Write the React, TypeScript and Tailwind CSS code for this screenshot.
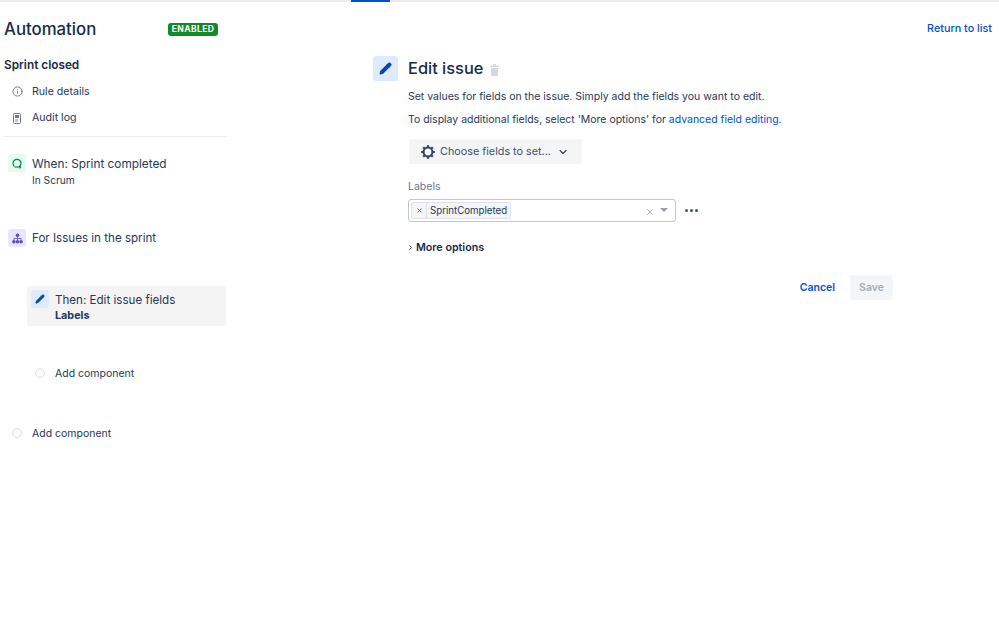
import { Info, ChevronDown, ChevronRight, X, Pencil } from "lucide-react";

function AddComponent({ className }: { className: string }) {
  return (
    <div className={`flex items-center h-[16px] ${className}`}>
      <span className="w-[10px] h-[10px] rounded-full border border-[#dfe1e6] bg-[#fafbfc] ml-[8px] mr-[10px] shrink-0" />
      <span className="mt-[2px] text-[10.5px] leading-[16px] text-[#253858]">Add component</span>
    </div>
  );
}

function Gear() {
  const teeth = [0, 45, 90, 135, 180, 225, 270, 315];
  return (
    <svg width="14" height="14" viewBox="0 0 14 14" className="ml-[12px] mr-[5px]">
      <circle cx="7" cy="7" r="4.4" fill="none" stroke="#344563" strokeWidth="2" />
      {teeth.map((a) => (
        <rect key={a} x="5.9" y="0.2" width="2.2" height="2.2" fill="#344563" transform={`rotate(${a} 7 7)`} />
      ))}
    </svg>
  );
}

function Sidebar() {
  return (
    <aside className="w-[222px] ml-[4px] shrink-0">
      <div className="flex items-center justify-between h-[24px] mt-[15px] pr-[8px]">
        <h1 className="text-[16.8px] leading-[24px] font-medium text-[#172b4d]">Automation</h1>
        <span className="h-[13px] w-[50px] rounded-[3px] bg-[#14892c] text-white text-[8.5px] leading-[13px] font-bold tracking-[0.4px] text-center">ENABLED</span>
      </div>
      <h2 className="mt-[15px] text-[11.8px] leading-[18px] font-semibold text-[#172b4d]">Sprint closed</h2>
      <div className="mt-[10px] flex items-center h-[16px] text-[10.6px] text-[#253858]">
        <Info size={11} strokeWidth={1.6} className="ml-[8px] mr-[9px] -mt-[1px] text-[#42526e]" />
        Rule details
      </div>
      <div className="mt-[10px] flex items-center h-[16px] text-[10.6px] text-[#253858]">
        <svg width="8" height="11" viewBox="0 0 8 11" className="ml-[9px] mr-[11px]">
          <rect x="0.5" y="0.5" width="7" height="10" rx="1" fill="#fff" stroke="#6b778c" />
          <rect x="2" y="2" width="4" height="3" fill="#6b778c" />
          <rect x="2" y="6" width="3" height="3" fill="#c1c7d0" />
        </svg>
        Audit log
      </div>
      <div className="mt-[10px] h-px bg-[#ebecf0]" />
      <div className="mt-[17px] flex">
        <div className="w-[18px] h-[18px] ml-[4px] mr-[6px] rounded-[3px] bg-[#e3fcef] flex items-center justify-center shrink-0">
          <svg width="12" height="12" viewBox="0 0 12 12" fill="none" stroke="#00875a" strokeWidth="1.2">
            <path d="M3.200 9.200A4 4 0 1 1 8.800 9.200" />
            <path d="M3.500 10h6" />
            <path d="M8.300 8.700L9.600 10 8.300 11.300" />
          </svg>
        </div>
        <div className="pt-[1px]">
          <div className="text-[11.8px] leading-[18px] text-[#253858]">When: Sprint completed</div>
          <div className="text-[10.2px] leading-[15px] text-[#253858]">In Scrum</div>
        </div>
      </div>
      <div className="mt-[41px] flex items-center">
        <div className="w-[18px] h-[18px] ml-[4px] mr-[6px] rounded-[3px] bg-[#eae6ff] flex items-center justify-center shrink-0">
          <svg width="11" height="11" viewBox="0 0 11 11" fill="#5e4db2">
            <circle cx="5.5" cy="2.2" r="1.8" />
            <circle cx="1.9" cy="8.8" r="1.8" />
            <circle cx="5.5" cy="8.8" r="1.8" />
            <circle cx="9.1" cy="8.8" r="1.8" />
            <path d="M5.1 3.5h.8v1.6h3.5v2h-.7V5.800H5.900v1.300h-.8V5.800H2.300v1.300h-.7v-2h3.500z" />
          </svg>
        </div>
        <div className="text-[11.6px] leading-[18px] text-[#253858]">For Issues in the sprint</div>
      </div>
      <div className="mt-[39px] ml-[23px] h-[40px] rounded-[3px] bg-[#f4f4f4] flex pt-[4px]">
        <div className="w-[18px] h-[18px] ml-[4px] mr-[6px] rounded-[3px] bg-[#deebff] flex items-center justify-center shrink-0">
          <Pencil size={10} fill="#0747a6" stroke="#0747a6" strokeWidth={2} />
        </div>
        <div className="pt-[1px]">
          <div className="text-[11.6px] leading-[18px] text-[#253858]">Then: Edit issue fields</div>
          <div className="text-[10.8px] leading-[14px] font-bold text-[#253858]">Labels</div>
        </div>
      </div>
      <AddComponent className="mt-[39px] ml-[23px]" />
      <AddComponent className="mt-[44px]" />
    </aside>
  );
}

function EditPanel() {
  return (
    <div className="w-[520px]">
      <div className="flex items-center h-[25px]">
        <div className="w-[25px] h-[25px] rounded-[3px] bg-[#deebff] flex items-center justify-center mr-[10px]">
          <Pencil size={13} fill="#0747a6" stroke="#0747a6" strokeWidth={2} />
        </div>
        <h2 className="-mt-[2px] text-[16.4px] leading-[24px] font-medium text-[#172b4d]">Edit issue</h2>
        <svg width="9" height="12" viewBox="0 0 9 12" fill="#d5d8de" className="ml-[7px] mt-[2px]">
          <rect x="3" y="0" width="3" height="1.5" />
          <rect x="0" y="1.500" width="9" height="1.500" rx="0.5" />
          <path d="M1 4h7v7a1 1 0 0 1-1 1H2a1 1 0 0 1-1-1z" />
        </svg>
      </div>
      <div className="ml-[35px]">
        <p className="mt-[8px] text-[10.5px] leading-[16px] text-[#253858]">Set values for fields on the issue. Simply add the fields you want to edit.</p>
        <p className="mt-[7px] text-[10.47px] leading-[16px] text-[#253858]">
          To display additional fields, select 'More options' for <span className="text-[#0052cc]">advanced field editing</span>.
        </p>
        <div className="mt-[11px] ml-[1px] w-[173px] h-[25px] rounded-[3px] bg-[#f4f5f7] flex items-center text-[#42526e]">
          <Gear />
          <span className="mt-[2px] text-[10.8px]">Choose fields to set...</span>
          <ChevronDown size={12} strokeWidth={2.2} className="ml-[6px] text-[#344563]" />
        </div>
        <div className="mt-[16px] text-[10.5px] leading-[14px] text-[#6b778c]">Labels</div>
        <div className="mt-[5px] flex items-center">
          <div className="w-[268px] h-[23px] rounded-[3px] border border-[#c1c7d0] bg-white flex items-center pl-[2px]">
            <div className="flex h-[17px] border border-[#dfe1e6] rounded-[2px] bg-[#f4f5f7] text-[#253858]">
              <span className="w-[15px] flex items-center justify-center border-r border-[#dfe1e6]">
                <X size={7} strokeWidth={2.5} />
              </span>
              <span className="px-[3px] text-[9.7px] leading-[15px]">SprintCompleted</span>
            </div>
            <X size={10} strokeWidth={1.5} className="ml-auto mr-[5px] mt-[2px] text-[#6b778c]" />
            <span className="mr-[7px] mb-[2px] w-0 h-0 border-l-[4px] border-r-[4px] border-t-[4px] border-l-transparent border-r-transparent border-t-[#97a0af]" />
          </div>
          <div className="ml-[9px] flex gap-[2px]">
            <span className="w-[3px] h-[3px] rounded-full bg-[#42526e]" />
            <span className="w-[3px] h-[3px] rounded-full bg-[#42526e]" />
            <span className="w-[3px] h-[3px] rounded-full bg-[#42526e]" />
          </div>
        </div>
        <div className="mt-[18px] flex items-center h-[16px] text-[10.7px] font-semibold text-[#172b4d]">
          <ChevronRight size={7} strokeWidth={3} className="-ml-[1px] mr-[2px] -mt-[2px]" />
          More options
        </div>
      </div>
      <div className="mt-[19px] flex items-center justify-end">
        <span className="text-[10.5px] font-semibold text-[#0052cc] mr-[15px]">Cancel</span>
        <span className="w-[43px] h-[25px] rounded-[3px] bg-[#f4f5f7] text-[10.5px] leading-[25px] font-semibold text-[#a5adba] text-center">Save</span>
      </div>
    </div>
  );
}

export default function App() {
  return (
    <div className="w-[999px] h-[625px] bg-white overflow-hidden font-['Inter','Liberation_Sans',sans-serif]">
      <div className="h-[2px] bg-[#ebecf0]">
        <div className="ml-[351px] w-[39px] h-[2px] bg-[#0052cc]" />
      </div>
      <div className="flex">
        <Sidebar />
        <div className="flex-1 ml-[147px]">
          <div className="flex justify-end pt-[19px] pr-[7px] h-[54px]">
            <span className="text-[10.8px] leading-[16px] font-medium text-[#0052cc]">Return to list</span>
          </div>
          <EditPanel />
        </div>
      </div>
    </div>
  );
}
